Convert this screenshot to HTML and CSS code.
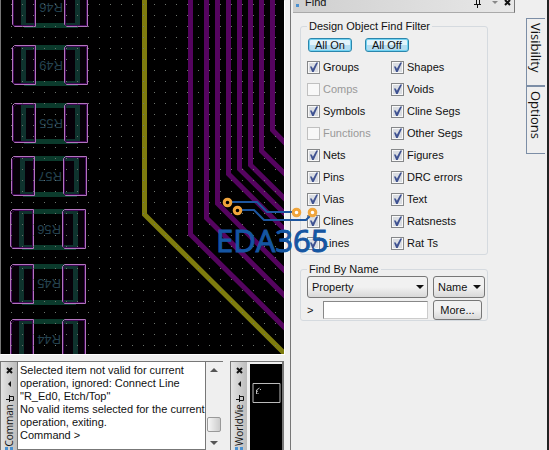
FILE: index.html
```html
<!DOCTYPE html>
<html lang="en">
<head>
<meta charset="utf-8">
<title>PCB layout</title>
<link rel="stylesheet" href="styles.css">
</head>
<body>
<div class="app">
  <main class="workspace">
    <svg class="board" viewBox="0 0 284 354" preserveAspectRatio="xMinYMin slice" role="img" aria-label="Board layout">
      <defs>
        <pattern id="grid" x="11" y="4" width="11" height="11" patternUnits="userSpaceOnUse">
          <rect width="1" height="1" fill="#6c746c"/>
        </pattern>
        <g id="part">
          <g fill="#0b3b2c">
            <rect x="12" y="0" width="54" height="5"/>
            <rect x="12" y="36" width="54" height="5"/>
            <rect x="9" y="2" width="5" height="36"/>
            <rect x="63" y="2" width="5" height="36"/>
          </g>
          <g fill="#30003e" fill-opacity=".12" stroke="#b274bd">
            <path d="M2.500.5H23.500V39.500H2.500L.5 37.500V2.500z"/>
            <path d="M54.500.5H75.500V39.500H54.500L52.500 37.500V2.500z"/>
          </g>
          <g fill="none" stroke="#3d0752">
            <path d="M1.500 38.500V3.500L4.500 1.500H22.500V38.500z"/>
            <path d="M53.500 38.500V3.500L56.500 1.500H74.500V38.500z"/>
          </g>
        </g>
      </defs>
      <rect width="284" height="354" fill="#000"/>
      <use href="#part" x="12" y="-13"/>
      <use href="#part" x="12" y="45"/>
      <use href="#part" x="12" y="103"/>
      <use href="#part" x="11" y="156"/>
      <use href="#part" x="10" y="209"/>
      <use href="#part" x="10" y="264"/>
      <use href="#part" x="10" y="319"/>
      <g class="refdes">
        <text transform="translate(63 3) rotate(180)">R46</text>
        <text transform="translate(63 61) rotate(180)">R49</text>
        <text transform="translate(63 119) rotate(180)">R55</text>
        <text transform="translate(62 172) rotate(180)">R57</text>
        <text transform="translate(61 225) rotate(180)">R56</text>
        <text transform="translate(61 279) rotate(180)">R45</text>
        <text transform="translate(61 335) rotate(180)">R44</text>
      </g>
      <g fill="none" stroke="#55045f" stroke-width="5">
        <path d="M190.500 0V234.500L286 329"/>
        <path d="M206.500 0V218L286 297"/>
        <path d="M217.500 0V203.500L286 272"/>
        <path d="M228.500 0V174L286 231"/>
        <path d="M239.500 0V169L286 215"/>
        <path d="M250.500 0V165L286 200"/>
        <path d="M261.500 0V151L286 175"/>
        <path d="M272.500 0V130L286 144"/>
      </g>
      <path d="M144.500 0V214.500L286 355" fill="none" stroke="#7e7c0e" stroke-width="5"/>
      <rect width="284" height="354" fill="url(#grid)"/>
      <path d="M.5 0V354" stroke="#777"/>
    </svg>
    <div class="docks">
      <section class="dock command">
        <header class="grip">
          <svg width="16" height="42" viewBox="0 0 16 42" aria-hidden="true">
            <path d="M6 6l5 5M11 6l-5 5" stroke="#111" stroke-width="2"/>
            <path d="M10 19v6l-3-3z" fill="#111"/>
            <path d="M8.500 33v7M5 37.500h3.500M8.500 34.500h4v4h-4" fill="none" stroke="#111"/>
          </svg>
          <span class="grip-name">Comman</span>
          <i class="grip-dots"></i>
        </header>
        <div class="log">Selected item not valid for current<br>operation, ignored: Connect Line<br>"R_Ed0, Etch/Top"<br>No valid items selected for the current<br>operation, exiting.<br>Command &gt;</div>
        <div class="scroll" aria-hidden="true">
          <i class="arrow up"></i><i class="thumb"></i><i class="arrow down"></i>
        </div>
      </section>
      <section class="dock world">
        <header class="grip">
          <svg width="16" height="42" viewBox="0 0 16 42" aria-hidden="true">
            <path d="M6 6l5 5M11 6l-5 5" stroke="#111" stroke-width="2"/>
            <path d="M10 19v6l-3-3z" fill="#111"/>
            <path d="M8.500 33v7M5 37.500h3.500M8.500 34.500h4v4h-4" fill="none" stroke="#111"/>
          </svg>
          <span class="grip-name">WorldVie</span>
          <i class="grip-dots"></i>
        </header>
        <svg class="overview" viewBox="0 0 33 86" preserveAspectRatio="xMidYMin slice" role="img" aria-label="World view">
          <rect width="33" height="86" fill="#000"/>
          <path d="M3.500 19.500h27v19h-27z" fill="none" stroke="#bbb"/>
          <path d="M10 24l-3 2 1 2M7 26v4M8 29l1 1M11 25v1" fill="none" stroke="#bbb"/>
        </svg>
      </section>
    </div>
  </main>

  <aside class="side">
    <section class="find">
      <header class="find-title">
        <i class="dots"></i><span>Find</span>
        <svg width="42" height="12" viewBox="0 0 42 12" aria-hidden="true">
          <path d="M4.500 0v4.500M7.500 0v4.500M2 4.500h7M5.500 5v3" fill="none" stroke="#111"/>
          <path d="M20 1h6l-3 3z" fill="#888"/>
          <path d="M33 0l5 5M38 0l-5 5" stroke="#111" stroke-width="2"/>
        </svg>
      </header>
      <form>
        <fieldset class="filter">
          <legend>Design Object Find Filter</legend>
          <div class="all">
            <button type="button">All On</button>
            <button type="button">All Off</button>
          </div>
          <div class="checks">
            <label><input type="checkbox" checked>Groups</label>
            <label><input type="checkbox" checked>Shapes</label>
            <label><input type="checkbox" disabled>Comps</label>
            <label><input type="checkbox" checked>Voids</label>
            <label><input type="checkbox" checked>Symbols</label>
            <label><input type="checkbox" checked>Cline Segs</label>
            <label><input type="checkbox" disabled>Functions</label>
            <label><input type="checkbox" checked>Other Segs</label>
            <label><input type="checkbox" checked>Nets</label>
            <label><input type="checkbox" checked>Figures</label>
            <label><input type="checkbox" checked>Pins</label>
            <label><input type="checkbox" checked>DRC errors</label>
            <label><input type="checkbox" checked>Vias</label>
            <label><input type="checkbox" checked>Text</label>
            <label><input type="checkbox" checked>Clines</label>
            <label><input type="checkbox" checked>Ratsnests</label>
            <label><input type="checkbox" checked>Lines</label>
            <label><input type="checkbox" checked>Rat Ts</label>
          </div>
        </fieldset>
        <fieldset class="by-name">
          <legend>Find By Name</legend>
          <div class="name-grid">
            <span class="drop"><select aria-label="Object type"><option>Property</option></select></span>
            <span class="drop"><select aria-label="Search by"><option>Name</option></select></span>
            <label class="entry">&gt;<input type="text" aria-label="Name to find"></label>
            <button type="button" class="more">More...</button>
          </div>
        </fieldset>
      </form>
    </section>
    <nav class="tabs">
      <button type="button">Visibility</button>
      <button type="button">Options</button>
    </nav>
  </aside>

  <svg class="logo" width="116" height="62" viewBox="0 0 116 62" role="img" aria-label="EDA365">
    <g fill="none" stroke="#1d569f" stroke-width="2">
      <path d="M16 6H41L51 16H76"/>
      <path d="M26 14H38L48 24H90L94 20"/>
    </g>
    <g fill="none" stroke="#f0a53c" stroke-width="3">
      <circle cx="11.500" cy="6.500" r="3.300"/>
      <circle cx="21.500" cy="14.500" r="3.300"/>
      <circle cx="80.500" cy="16.500" r="3.300" fill="#fff"/>
      <circle cx="96.500" cy="16.500" r="3.300" fill="#fff"/>
    </g>
    <text x="0" y="56">EDA365</text>
  </svg>
</div>
</body>
</html>
```

FILE: styles.css
```css
* { box-sizing: border-box; }

body {
  margin: 0;
  background: #efefef;
  color: #111;
  font: 11px/13px "Liberation Sans", Arial, sans-serif;
}

button, input, select { font: inherit; color: inherit; }

.app {
  position: relative;
  display: grid;
  grid-template-columns: minmax(0, 53fr) minmax(0, 47fr);
  min-height: 100vh;
}

.workspace {
  display: flex;
  flex-direction: column;
  gap: 7px;
  padding-right: 6px;
  border-right: 1px solid #777;
}

.board {
  flex: 1;
  width: 100%;
  min-height: 0;
  box-shadow: 1px 1px #fff;
}

.refdes {
  font: 13px "Liberation Sans", sans-serif;
  fill: #25424f;
}

.docks {
  display: flex;
  gap: 7px;
  height: 89px;
}

.dock { display: flex; border-top: 1px solid #777; }
.command { flex: 1; min-width: 0; }
.world { width: 54px; border-right: 2px solid #777; gap: 3px; }

.grip {
  display: flex;
  flex-direction: column;
  align-items: center;
  width: 17px;
  border-left: 1px solid #777;
  background: linear-gradient(90deg, #e4e4e4, #bcbcbc);
}

.grip svg { flex: none; }

.grip-name {
  writing-mode: vertical-rl;
  transform: rotate(180deg);
  font: 10px/14px "Open Sans", sans-serif;
}

.grip-dots {
  width: 8px;
  height: 3px;
  margin-top: auto;
  border: solid #4a90d0;
  border-width: 0 3px;
}

.overview { flex: 1; width: 33px; min-width: 0; margin-top: 2px; }

.log {
  flex: 1;
  min-width: 0;
  padding: 2px 0 0 2px;
  border: 1px solid #777;
  border-top: 0;
  background: #fff;
  white-space: nowrap;
}

.scroll {
  display: flex;
  flex-direction: column;
  align-items: center;
  width: 17px;
  padding: 6px 0 5px;
}

.arrow { border: 4px solid transparent; }
.up { border-top: 0; border-bottom-color: #555; }
.down { border-bottom: 0; border-top-color: #555; margin-top: 9px; }

.thumb {
  width: 14px;
  height: 15px;
  margin-top: auto;
  border: 1px solid #999;
  border-radius: 2px;
  background: linear-gradient(90deg, #f6f6f6, #ccc);
}

.side {
  display: flex;
  justify-content: space-between;
  padding-right: 2px;
  border-right: 2px solid #222;
}

.find { flex: 0 1 224px; padding-left: 2px; }

.find-title {
  display: flex;
  height: 13px;
  padding-left: 3px;
  border-right: 1px solid #777;
  border-bottom: 1px solid #aaa;
  background: linear-gradient(90deg, #cfcfcf, #e8e8e8);
  line-height: 5px;
}

.find-title span { flex: 1; padding-left: 6px; }

.dots { width: 3px; height: 7px; border-bottom: 3px solid #4a90d0; }

fieldset {
  min-width: 0;
  margin: 0 27px 0 7px;
  padding: 0 2px 0 6px;
  border: 1px solid #d5dadf;
  border-radius: 3px;
}

legend { padding: 0 2px; height: 13px; }

.filter { margin-top: 7px; padding-bottom: 0; }
.by-name { margin-top: 8px; }

.all { display: flex; gap: 13px; padding: 5px 1px 4px; }

.all button {
  height: 14px;
  padding: 0 6px;
  border: 1px solid #2c86ac;
  border-radius: 3px;
  background: linear-gradient(#e2f3fb 50%, #b5dcf0 50%);
  box-shadow: inset 0 0 0 1px #70d2f2;
  line-height: 12px;
}

.checks { display: grid; grid-template-columns: 84px 1fr; }

.checks label {
  display: flex;
  align-items: center;
  gap: 3px;
  height: 22px;
  white-space: nowrap;
}

.checks label:has(:disabled) { color: #999; }

.checks input {
  appearance: none;
  width: 13px;
  height: 13px;
  margin: 0;
  border: 1px solid #858789;
  background: #f8f8f8;
  box-shadow: inset 0 0 0 1px #f8f8f8, inset 0 0 0 6px #dadde2;
}

.checks input:disabled { border-color: #c0c0c0; box-shadow: none; }

.checks input:checked::before {
  content: "";
  display: block;
  width: 11px;
  height: 11px;
  background: #3f5291;
  clip-path: polygon(18% 45%, 34% 45%, 45% 65%, 76% 9%, 92% 9%, 52% 95%, 38% 95%);
}

.name-grid {
  display: grid;
  grid-template-columns: minmax(0, 1fr) 52px;
  gap: 2px 5px;
}

.drop { position: relative; }

.drop select {
  display: block;
  appearance: none;
  width: 100%;
  height: 22px;
  padding: 0 4px;
  border: 1px solid #777;
  border-radius: 3px;
  background: linear-gradient(#f1f1f1 50%, #d8d8d8);
}

.drop::after {
  content: "";
  position: absolute;
  right: 4px;
  top: 9px;
  border: 4px solid transparent;
  border-top-color: #111;
  border-bottom: 0;
}

.entry { display: flex; align-items: center; justify-content: space-between; }

.entry input {
  width: calc(100% - 16px);
  height: 18px;
  border: 1px solid #888;
  border-right-color: #ccc;
  border-bottom-color: #ccc;
  background: #fff;
}

.more {
  width: 49px;
  height: 20px;
  padding: 0;
  border: 1px solid #777;
  border-radius: 3px;
  background: linear-gradient(#f1f1f1 50%, #d8d8d8);
}

.tabs { display: flex; flex-direction: column; padding-top: 18px; }

.tabs button {
  writing-mode: vertical-rl;
  width: 19px;
  height: 68px;
  padding: 4px 2px;
  border: 1px solid #7c8ea6;
  border-right: 0;
  background: #efefef;
  font: 13px/14px "Open Sans", sans-serif;
  text-align: left;
}

.logo {
  position: absolute;
  left: 39.4%;
  top: 196px;
  overflow: visible;
}

.logo text {
  font: 31px "Open Sans", sans-serif;
  fill: #1556a2;
  stroke: #1556a2;
  stroke-width: 1px;
}
```
